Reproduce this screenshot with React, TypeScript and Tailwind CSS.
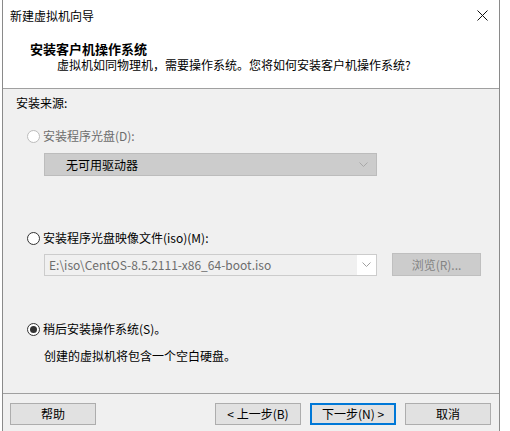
import React from 'react';

const font = { fontFamily: '"Noto Sans CJK SC", "Noto Sans", sans-serif' };

const Radio: React.FC<{ checked?: boolean; disabled?: boolean }> = ({ checked, disabled }) => (
  <span
    className={`flex h-[13px] w-[13px] shrink-0 items-center justify-center rounded-full border bg-white ${
      disabled ? 'border-[#bcbcbc]' : 'border-[#333333]'
    }`}
  >
    {checked && <span className="h-[7px] w-[7px] rounded-full bg-[#333333]" />}
  </span>
);

const Chevron: React.FC<{ color: string }> = ({ color }) => (
  <svg width="9" height="5" viewBox="0 0 9 5" fill="none">
    <path d="M0.5 0.5 L4.5 4.5 L8.5 0.5" stroke={color} strokeWidth="1" />
  </svg>
);

const Button: React.FC<{ label: string; primary?: boolean }> = ({ label, primary }) => (
  <div
    className={`flex h-[22px] w-[86px] items-center justify-center bg-[#e1e1e1] text-[12px] leading-none text-black ${
      primary ? 'border-2 border-[#0078d7]' : 'border border-[#adadad]'
    }`}
  >
    {label}
  </div>
);

export default function App() {
  return (
    <div className="flex h-[431px] w-[510px] overflow-hidden bg-white" style={font}>
      <div className="ml-[2px] flex w-[498px] shrink-0 flex-col border-x border-[#8a8a8a] bg-[#f0f0f0]">
        {/* title bar + header */}
        <div className="bg-white">
          <div className="flex h-[31px] items-center justify-between pl-[7px] pr-[10px]">
            <span className="text-[12px] leading-none text-black">新建虚拟机向导</span>
            <svg width="11" height="11" viewBox="0 0 11 11" className="mr-[1px]">
              <path d="M0.5 0.5 L10.5 10.5 M10.5 0.5 L0.5 10.5" stroke="#111" strokeWidth="1" />
            </svg>
          </div>
          <div className="h-[58px] border-b border-[#a0a0a0] pl-[27px]">
            <div className="pt-[10px] text-[13px] font-bold leading-[16px] text-black">安装客户机操作系统</div>
            <div className="pl-[27px] text-[12px] leading-[16px] text-black">
              虚拟机如同物理机，需要操作系统。您将如何安装客户机操作系统?
            </div>
          </div>
        </div>

        {/* body */}
        <div className="h-[305px] border-b border-[#a0a0a0] text-[12px] leading-[16px] text-black">
          <div className="mt-[6px] pl-[13px]">安装来源:</div>

          <div className="mt-[17px] flex h-[16px] items-center gap-[3px] pl-[24px] text-[#6d6d6d]">
            <Radio disabled />
            <span>安装程序光盘(D):</span>
          </div>
          <div className="ml-[41px] mt-[9px] flex h-[23px] w-[333px] items-center justify-between border border-[#bcbcbc] bg-[#cccccc] pl-[21px] pr-[8px]">
            <span>无可用驱动器</span>
            <Chevron color="#a8a8a8" />
          </div>

          <div className="mt-[54px] flex h-[16px] items-center gap-[3px] pl-[24px]">
            <Radio />
            <span>安装程序光盘映像文件(iso)(M):</span>
          </div>
          <div className="mt-[7px] flex items-center pl-[41px]">
            <div className="flex h-[22px] w-[333px] items-center border border-[#cccccc] bg-white">
              <div className="flex h-full w-[312px] items-center bg-[#f0f0f0] pl-[4px] text-[#6d6d6d]">
                E:\iso\CentOS-8.5.2111-x86_64-boot.iso
              </div>
              <div className="flex flex-1 items-center justify-center">
                <Chevron color="#a0a0a0" />
              </div>
            </div>
            <div className="ml-[15px] flex h-[23px] w-[89px] items-center justify-center border border-[#bfbfbf] bg-[#cccccc] text-[#838383]">
              浏览(R)...
            </div>
          </div>

          <div className="mt-[45px] flex h-[16px] items-center gap-[3px] pl-[24px]">
            <Radio checked />
            <span>稍后安装操作系统(S)。</span>
          </div>
          <div className="mt-[11px] pl-[41px]">创建的虚拟机将包含一个空白硬盘。</div>
        </div>

        {/* footer */}
        <div className="flex items-start pl-[7px] pt-[9px]">
          <Button label="帮助" />
          <div className="ml-[119px]">
            <Button label="< 上一步(B)" />
          </div>
          <div className="ml-[9px]">
            <Button label="下一步(N) >" primary />
          </div>
          <div className="ml-[9px]">
            <Button label="取消" />
          </div>
        </div>
      </div>
    </div>
  );
}
